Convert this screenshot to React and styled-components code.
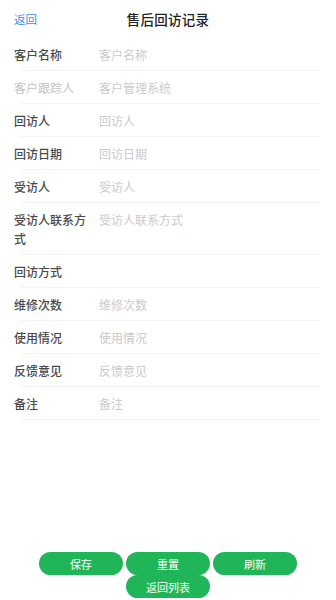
import styled, { createGlobalStyle } from "styled-components";

const GlobalStyle = createGlobalStyle`
  html, body {
    margin: 0;
    padding: 0;
    background: #ffffff;
    font-family: "Noto Sans CJK SC", "Noto Sans", sans-serif;
  }
`;

const Page = styled.div`
  min-height: 100vh;
  display: flex;
  flex-direction: column;
  background: #ffffff;
`;

const Header = styled.div`
  height: 38px;
  display: grid;
  grid-template-columns: 1fr auto 1fr;
  align-items: center;
  padding: 0 14px;
`;

const BackLink = styled.span`
  font-size: 11.5px;
  color: #3a8ee6;
  justify-self: start;
`;

const Title = styled.div`
  font-size: 13.5px;
  font-weight: 500;
  color: #222;
  letter-spacing: 0.3px;
`;

const Form = styled.div`
  display: flex;
  flex-direction: column;
`;

const Row = styled.div`
  position: relative;
  display: flex;
  align-items: flex-start;
  padding: 7px 16px 7px 14px;
  font-size: 12px;
  line-height: 19px;

  &::after {
    content: "";
    position: absolute;
    left: 20px;
    right: 16px;
    bottom: 0;
    height: 1px;
    background: #f4f4f4;
  }
`;

const Label = styled.div`
  flex: 0 0 75px;
  margin-right: 10px;
  color: ${(p) => (p.$disabled ? "#c4c4c4" : "#4a4a4a")};
  font-weight: ${(p) => (p.$disabled ? 400 : 500)};
`;

const Value = styled.div`
  flex: 1;
  color: #cacaca;
`;

const Footer = styled.div`
  margin-top: auto;
  display: flex;
  flex-wrap: wrap;
  justify-content: center;
  column-gap: 3px;
  padding: 0 0 2px;
`;

const Button = styled.button`
  width: 84px;
  height: 23px;
  border: none;
  border-radius: 12px;
  background: #21b55a;
  color: #ffffff;
  font-family: inherit;
  font-size: 11px;
  padding: 0;
`;

const fields = [
  { label: "客户名称", placeholder: "客户名称" },
  { label: "客户跟踪人", placeholder: "客户管理系统", disabled: true },
  { label: "回访人", placeholder: "回访人" },
  { label: "回访日期", placeholder: "回访日期" },
  { label: "受访人", placeholder: "受访人" },
  { label: "受访人联系方式", placeholder: "受访人联系方式" },
  { label: "回访方式", placeholder: "" },
  { label: "维修次数", placeholder: "维修次数" },
  { label: "使用情况", placeholder: "使用情况" },
  { label: "反馈意见", placeholder: "反馈意见" },
  { label: "备注", placeholder: "备注" },
];

const App = () => {
  return (
    <Page>
      <GlobalStyle />
      <Header>
        <BackLink>返回</BackLink>
        <Title>售后回访记录</Title>
        <span></span>
      </Header>
      <Form>
        {fields.map((f) => (
          <Row key={f.label}>
            <Label $disabled={f.disabled}>{f.label}</Label>
            <Value>{f.placeholder}</Value>
          </Row>
        ))}
      </Form>
      <Footer>
        <Button>保存</Button>
        <Button>重置</Button>
        <Button>刷新</Button>
        <Button>返回列表</Button>
      </Footer>
    </Page>
  );
};

export default App;
